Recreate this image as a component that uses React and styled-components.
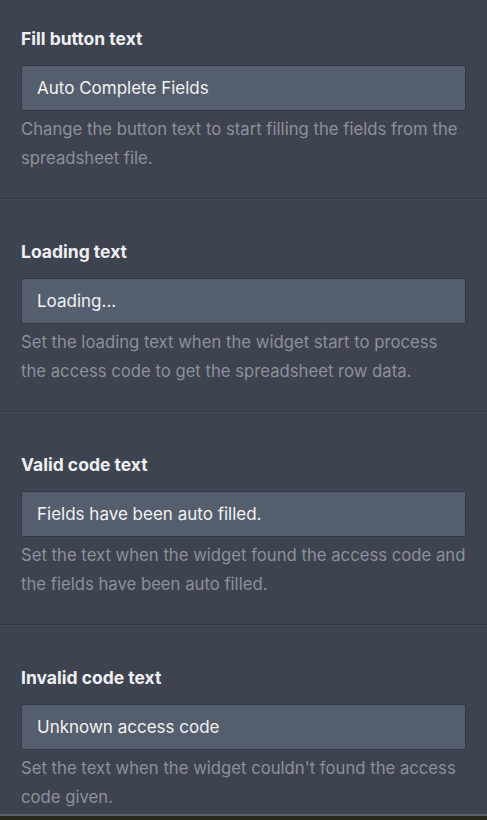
import React from 'react'
import styled, { createGlobalStyle } from 'styled-components'

const GlobalStyle = createGlobalStyle`
  html, body {
    margin: 0;
    padding: 0;
    background: #3e4350;
  }
  body {
    font-family: Inter, "Noto Sans", sans-serif;
    -webkit-font-smoothing: antialiased;
  }
`

const Panel = styled.div`
  width: 487px;
  height: 820px;
  background: #3e4350;
  overflow: hidden;
  display: flex;
  flex-direction: column;
`

const Section = styled.div.withConfig({
  shouldForwardProp: prop => !['$top', '$bottom', '$last'].includes(prop)
})`
  display: flex;
  flex-direction: column;
  padding: ${({ $top = 42 }) => `${$top}px`} 21px
    ${({ $bottom = 25 }) => `${$bottom}px`};
  border-bottom: ${({ $last }) => ($last ? '2px solid #5b5f67' : '1px solid #353944')};
  box-shadow: ${({ $last }) => ($last ? 'none' : '0 1px 0 #444956')};
`

const Title = styled.div`
  font-size: 17.5px;
  line-height: 22px;
  font-weight: 700;
  color: #eef0f3;
`

const Field = styled.div`
  margin-top: 15px;
  height: 46px;
  box-sizing: border-box;
  background: #555e6c;
  border: 1px solid #343842;
  border-radius: 2px;
  display: flex;
  align-items: center;
  padding: 0 15px;
  font-size: 17px;
  color: #f1f2f4;
`

const Hint = styled.div`
  margin-top: 4px;
  font-size: 16.7px;
  line-height: 29px;
  color: #8c919b;
`

const Footer = styled.div`
  flex: 1;
  background: #2b261b;
`

const fields = [
  {
    title: 'Fill button text',
    value: 'Auto Complete Fields',
    hint: 'Change the button text to start filling the fields from the spreadsheet file.'
  },
  {
    title: 'Loading text',
    value: 'Loading...',
    hint: 'Set the loading text when the widget start to process the access code to get the spreadsheet row data.'
  },
  {
    title: 'Valid code text',
    value: 'Fields have been auto filled.',
    hint: 'Set the text when the widget found the access code and the fields have been auto filled.'
  },
  {
    title: 'Invalid code text',
    value: 'Unknown access code',
    hint: "Set the text when the widget couldn't found the access code given."
  }
]

const App = () => (
  <>
    <GlobalStyle />
    <Panel>
      {fields.map((f, i) => (
        <Section
          key={f.title}
          $top={i === 0 ? 28 : 42}
          $bottom={i === fields.length - 1 ? 2 : 25}
          $last={i === fields.length - 1}
        >
          <Title>{f.title}</Title>
          <Field>{f.value}</Field>
          <Hint>{f.hint}</Hint>
        </Section>
      ))}
      <Footer />
    </Panel>
  </>
)

export default App
